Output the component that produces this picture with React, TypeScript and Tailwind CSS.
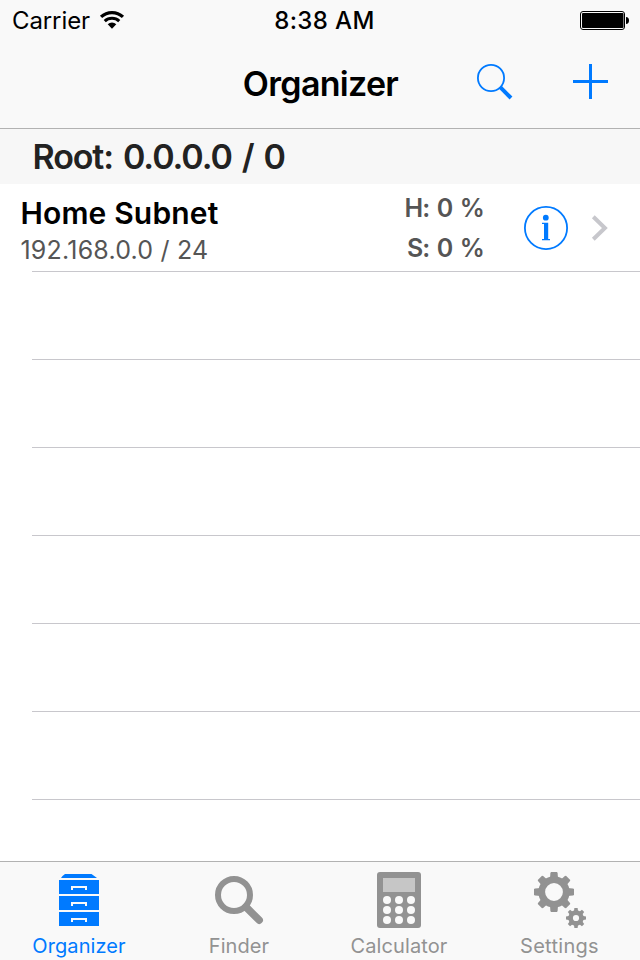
import React from 'react';

interface Subnet {
  id: string;
  name: string;
  address: string;
  hosts: string;
  subnets: string;
}

interface Tab {
  id: string;
  label: string;
  icon: React.ReactNode;
  labelClass: string;
}

const subnets: Subnet[] = [
  {
    id: 'home',
    name: 'Home Subnet',
    address: '192.168.0.0 / 24',
    hosts: 'H: 0 %',
    subnets: 'S: 0 %',
  },
];

const EMPTY_ROWS = 6;
const TEETH = [0, 45, 90, 135, 180, 225, 270, 315];

function WifiIcon() {
  return (
    <svg className="ml-[9px] h-[20px] w-[26px]" viewBox="0 0 26 20" fill="none">
      <path d="M2.05 6.85A16.2 16.2 0 0 1 23.95 6.85" stroke="#000" strokeWidth="3.3" />
      <path d="M5.75 11.1A10.6 10.6 0 0 1 20.25 11.1" stroke="#000" strokeWidth="3.1" />
      <path d="M13 18.8L8.7 14.2A6.3 6.3 0 0 1 17.3 14.2Z" fill="#000" />
    </svg>
  );
}

function BatteryIcon() {
  return (
    <svg className="h-[20px] w-[50px]" viewBox="0 0 50 20" fill="none">
      <rect x="0.5" y="1.5" width="44" height="18" rx="2.5" stroke="#000" />
      <rect x="2" y="3" width="41.5" height="15" rx="1" fill="#000" />
      <path d="M46 7C48 7.2 49 8.4 49 10.5S48 13.8 46 14Z" fill="#000" />
    </svg>
  );
}

function SearchIcon() {
  return (
    <svg className="h-[40px] w-[40px]" viewBox="0 0 40 40" fill="none" stroke="#007aff">
      <circle cx="16" cy="16" r="13.1" strokeWidth="1.8" />
      <path d="M25.2 25.2L36 36" strokeWidth="4" />
    </svg>
  );
}

function PlusIcon() {
  return (
    <svg className="h-[35px] w-[35px]" viewBox="0 0 35 35" fill="#007aff">
      <rect x="16" y="0" width="3" height="35" />
      <rect x="0" y="16" width="35" height="3" />
    </svg>
  );
}

function InfoIcon() {
  return (
    <svg className="h-[44px] w-[44px]" viewBox="0 0 44 44" fill="#007aff">
      <circle cx="22" cy="22" r="21.1" fill="none" stroke="#007aff" strokeWidth="1.8" />
      <circle cx="21.8" cy="11.7" r="2.9" />
      <path d="M18 16.8H24.2V33H26V34.2H18V33H20V18H18Z" />
    </svg>
  );
}

function ChevronIcon() {
  return (
    <svg className="h-[28px] w-[18px]" viewBox="0 0 18 28" fill="none">
      <path d="M2.3 2.7L13.9 14L2.3 25.3" stroke="#c7c7cc" strokeWidth="4" />
    </svg>
  );
}

function CabinetIcon() {
  return (
    <svg className="h-[64px] w-[64px]" viewBox="0 0 64 64" fill="#007aff">
      <path d="M17 6H43.5L49 10H13Q14 8 17 6Z" />
      {[12, 28, 44].map((y) => (
        <g key={y}>
          <rect x="11" y={y} width="40" height="14" />
          <path d={`M24 ${y + 10}V${y + 7}H38V${y + 10}`} fill="none" stroke="#f9f9f9" strokeWidth="2" />
        </g>
      ))}
    </svg>
  );
}

function FinderIcon() {
  return (
    <svg className="h-[64px] w-[64px]" viewBox="0 0 64 64" fill="none" stroke="#929292">
      <circle cx="26" cy="27" r="16" strokeWidth="6" />
      <path d="M38 39L51.2 52.2" strokeWidth="7.5" strokeLinecap="round" />
    </svg>
  );
}

function CalculatorIcon() {
  return (
    <svg className="h-[64px] w-[64px]" viewBox="0 0 64 64">
      <rect x="9" y="4" width="44" height="56" rx="3" fill="#929292" />
      <rect x="15" y="10" width="32" height="14" fill="#c6c6c6" />
      {[32, 42, 52].map((y) =>
        [19, 31, 43].map((x) => <circle key={`${x}-${y}`} cx={x} cy={y} r="4" fill="#f9f9f9" />)
      )}
    </svg>
  );
}

function GearsIcon() {
  return (
    <svg className="h-[64px] w-[64px]" viewBox="0 0 64 64" fill="#929292">
      <circle cx="26" cy="24" r="12.3" fill="none" stroke="#929292" strokeWidth="6.8" />
      {TEETH.map((angle) => (
        <path key={angle} d="M23 4H29L29.6 5L30 11H22L22.4 5Z" transform={`rotate(${angle} 26 24)`} />
      ))}
      <circle cx="48" cy="50" r="5.4" fill="none" stroke="#929292" strokeWidth="4.6" />
      {TEETH.map((angle) => (
        <path key={angle} d="M46.4 40H49.6L50.2 44H45.8Z" transform={`rotate(${angle} 48 50)`} />
      ))}
    </svg>
  );
}

const tabs: Tab[] = [
  { id: 'organizer', label: 'Organizer', icon: <CabinetIcon />, labelClass: 'tracking-[0.1px] text-[#007aff]' },
  { id: 'finder', label: 'Finder', icon: <FinderIcon />, labelClass: 'tracking-[0.1px] text-[#929292]' },
  { id: 'calculator', label: 'Calculator', icon: <CalculatorIcon />, labelClass: 'tracking-[0.1px] text-[#929292]' },
  { id: 'settings', label: 'Settings', icon: <GearsIcon />, labelClass: 'pl-px tracking-[0.3px] text-[#929292]' },
];

function StatusBar() {
  return (
    <div className="grid h-[40px] grid-cols-[210px_1fr_210px] pl-[12px] pr-[10px] text-[24px] leading-[40px] text-black">
      <div className="flex items-start">
        <span className="pt-[1px] tracking-[-0.1px]">Carrier</span>
        <div className="pt-[10px]">
          <WifiIcon />
        </div>
      </div>
      <div className="pl-[7px] pt-[1px] text-center font-medium tracking-[0.4px]">8:38 AM</div>
      <div className="flex justify-end pt-[10px]">
        <BatteryIcon />
      </div>
    </div>
  );
}

function NavBar() {
  return (
    <div className="grid h-[88px] grid-cols-[160px_1fr_160px] items-center">
      <span />
      <h1 className="pl-[1px] text-center text-[34px] font-semibold leading-[88px] tracking-[-0.7px] text-black">
        Organizer
      </h1>
      <div className="flex justify-between pb-[4px] pr-[32px]">
        <div className="-ml-[5px]">
          <SearchIcon />
        </div>
        <div className="pt-[2px]">
          <PlusIcon />
        </div>
      </div>
    </div>
  );
}

function SubnetRow({ subnet }: { subnet: Subnet }) {
  return (
    <li className="flex h-[87px] pl-[20.5px] pr-[31px]">
      <div className="flex-1 pt-[9px]">
        <div className="text-[30px] font-semibold leading-[40px] tracking-[0.15px] text-black">{subnet.name}</div>
        <div className="text-[25px] leading-[34px] tracking-[0.2px] text-[#555]">{subnet.address}</div>
      </div>
      <div className="pt-[4px] text-right text-[25px] font-semibold leading-[40px] tracking-[-0.9px] [word-spacing:2px] text-[#555]">
        <div>{subnet.hosts}</div>
        <div>{subnet.subnets}</div>
      </div>
      <div className="ml-[40px] pt-[22px]">
        <InfoIcon />
      </div>
      <div className="ml-[23px] pt-[30px]">
        <ChevronIcon />
      </div>
    </li>
  );
}

function TabBar() {
  return (
    <nav className="grid h-[99px] grid-cols-4 border-t border-[#b2b2b2] bg-[#f9f9f9] pt-[6px]">
      {tabs.map((tab) => (
        <div key={tab.id} className="flex flex-col items-center">
          {tab.icon}
          <span className={`-ml-[2px] text-[20px] leading-[28px] ${tab.labelClass}`}>{tab.label}</span>
        </div>
      ))}
    </nav>
  );
}

export default function App() {
  return (
    <div className="flex h-[960px] w-[640px] flex-col overflow-hidden bg-white font-['Inter',sans-serif]">
      <header className="border-b border-[#b2b2b2] bg-[#f9f9f9]">
        <StatusBar />
        <NavBar />
      </header>

      <main className="flex-1 overflow-hidden">
        <h2 className="h-[55px] bg-[#f7f7f7] pl-[32.5px] pt-px text-[34px] font-semibold leading-[54px] tracking-[-1.1px] [word-spacing:2.5px] text-[#222]">
          Root: 0.0.0.0 / 0
        </h2>
        <ul>
          {subnets.map((subnet) => (
            <SubnetRow key={subnet.id} subnet={subnet} />
          ))}
        </ul>
        <div className="ml-[32px] border-t border-[#c8c7cc]">
          {Array.from({ length: EMPTY_ROWS }, (_, index) => (
            <div key={index} className="h-[88px] border-b border-[#c8c7cc]" />
          ))}
        </div>
      </main>

      <TabBar />
    </div>
  );
}
